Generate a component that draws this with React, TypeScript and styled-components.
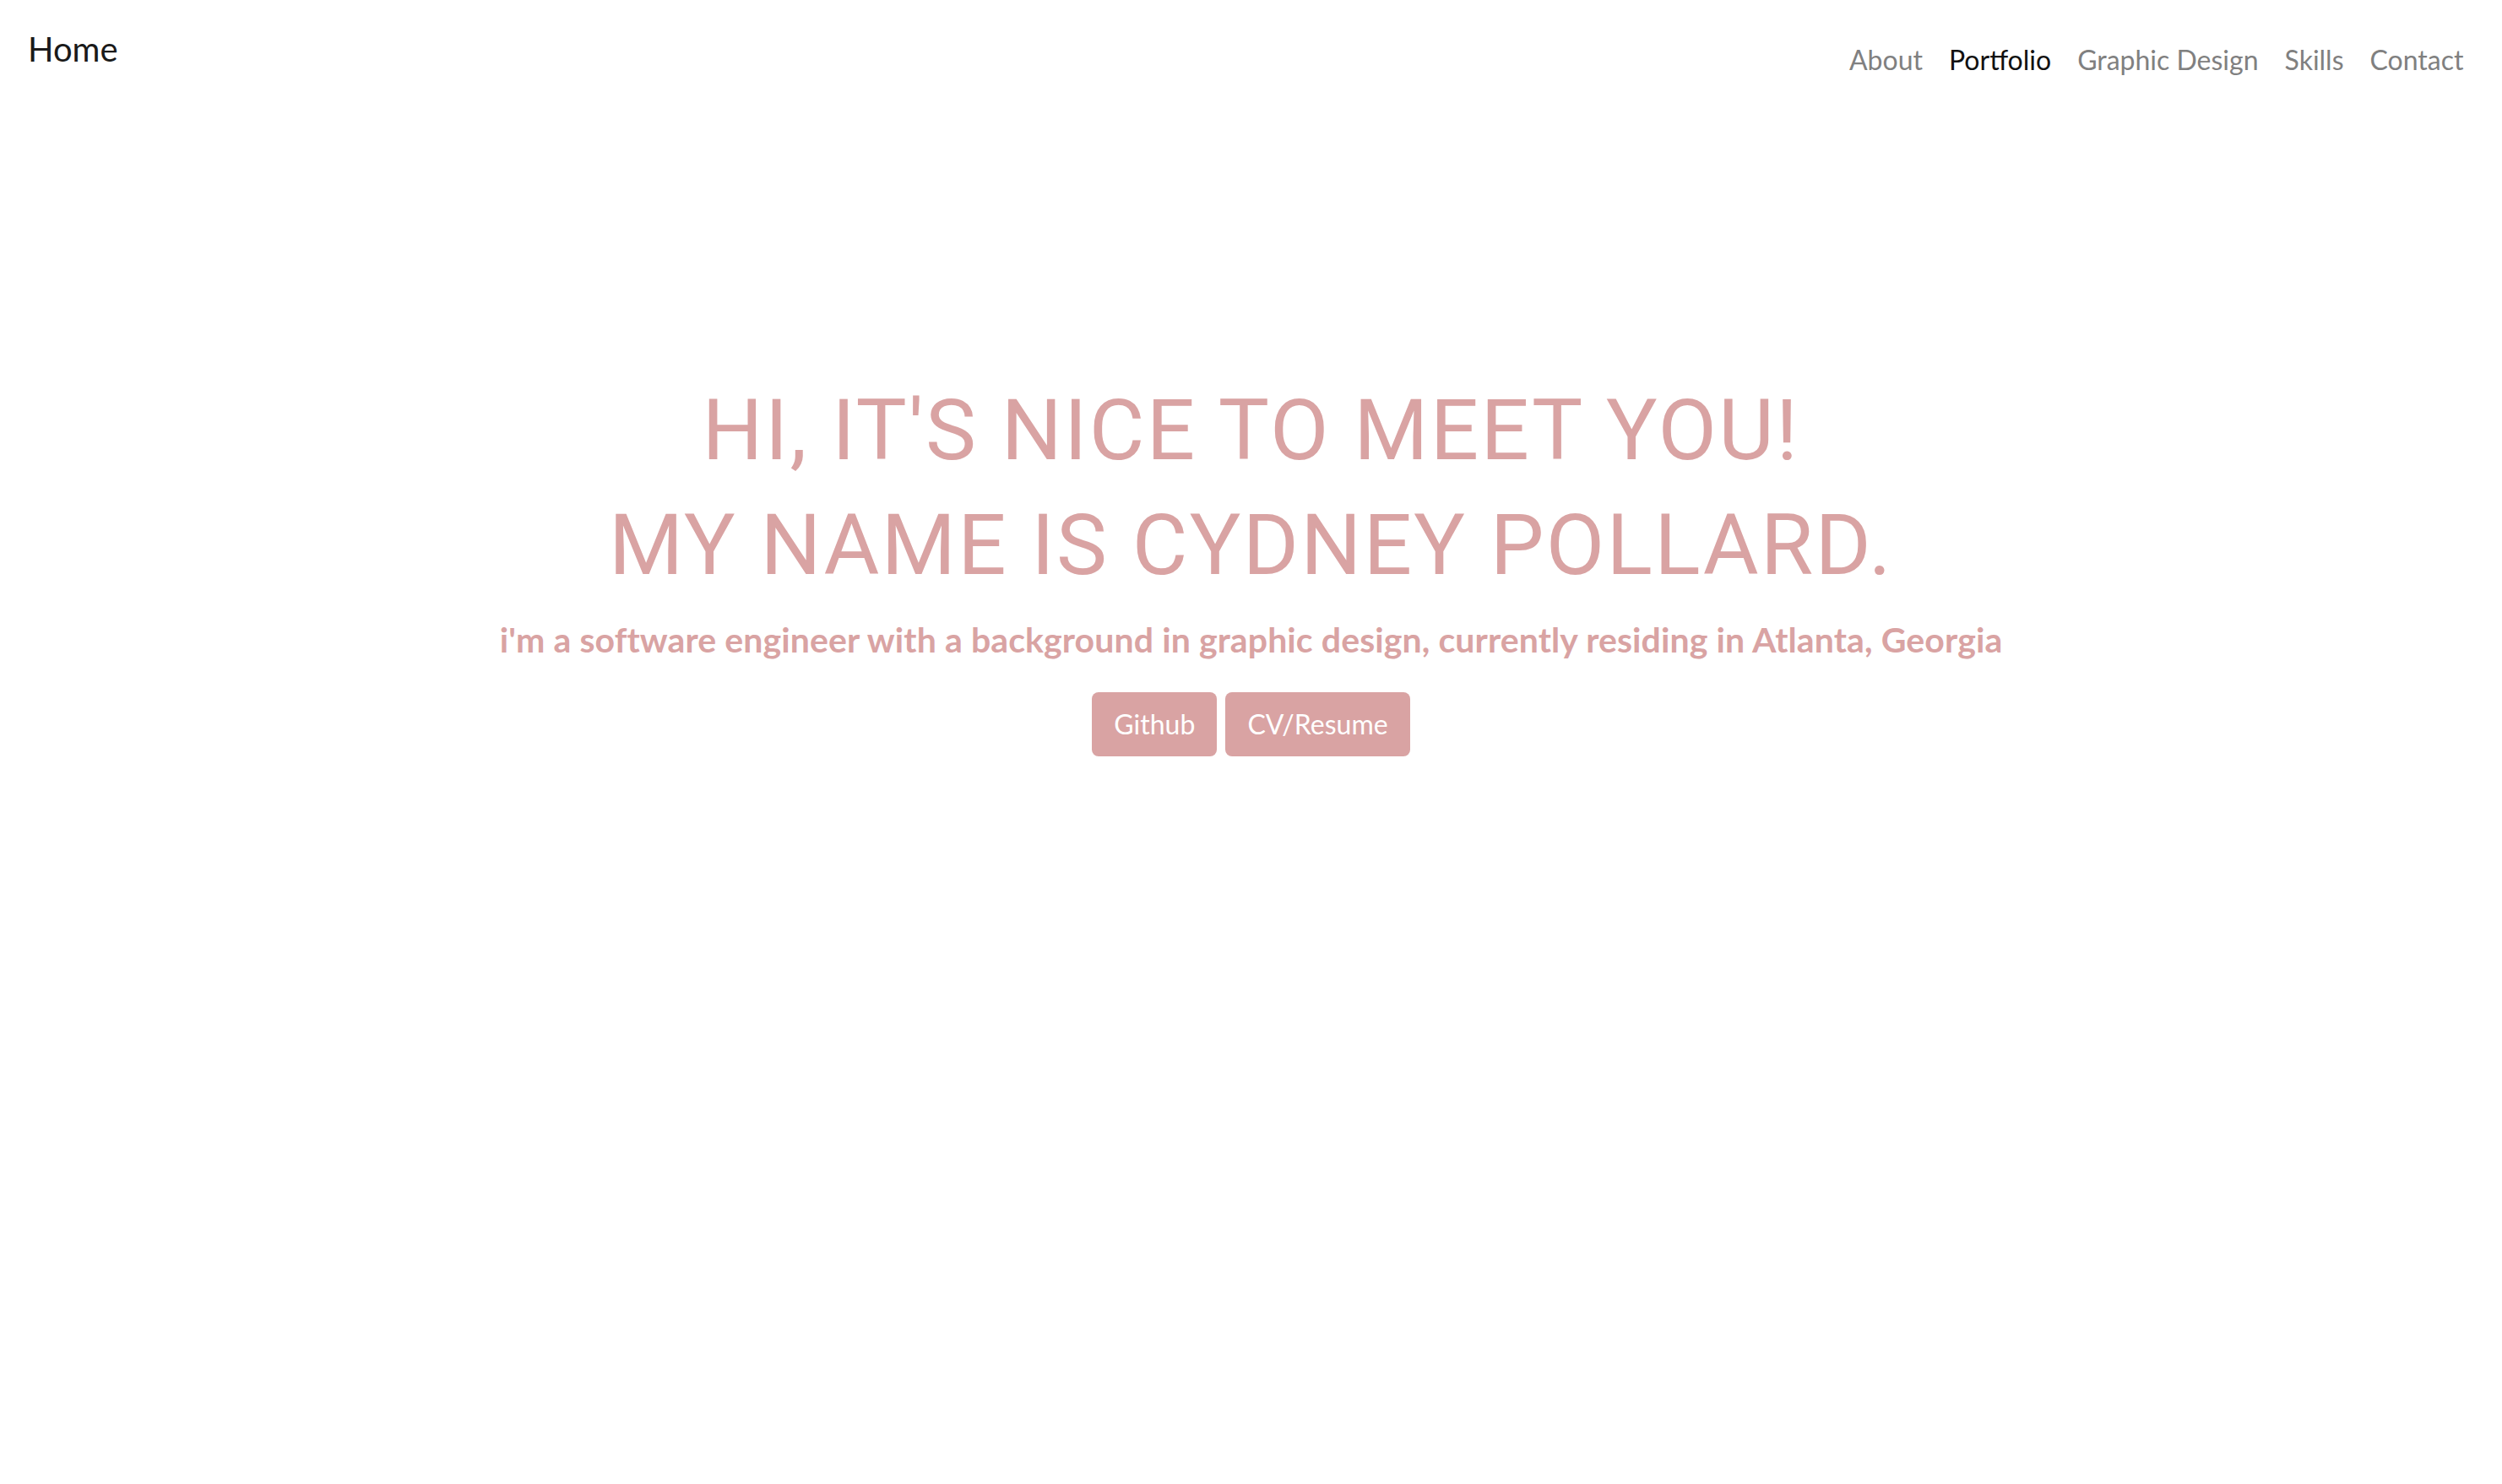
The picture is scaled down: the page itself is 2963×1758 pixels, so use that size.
import React from "react";
import styled, { createGlobalStyle } from "styled-components";

const Global = createGlobalStyle`
  html, body { margin: 0; padding: 0; background: #ffffff; }
  body { font-family: "Lato", "Open Sans", sans-serif; }
  * { box-sizing: border-box; }
`;

const PINK = "#d9a3a3";

const Page = styled.div`
  min-height: 100vh;
  background: #fff;
`;

const Header = styled.header`
  display: flex;
  justify-content: space-between;
  align-items: flex-start;
  padding: 34px 30px 0 33px;
`;

const Brand = styled.a`
  font-family: "Lato", sans-serif;
  font-size: 40px;
  line-height: 48px;
  color: #1a1a1a;
  text-decoration: none;
`;

const Nav = styled.nav`
  display: flex;
  margin-top: 18px;
`;

const NavLink = styled.a<{ $active?: boolean }>`
  font-family: "Lato", sans-serif;
  font-size: 32px;
  line-height: 38px;
  padding: 0 15.5px;
  color: ${(p) => (p.$active ? "#111111" : "#808080")};
  text-decoration: none;
`;

const Hero = styled.main`
  display: flex;
  flex-direction: column;
  align-items: center;
  padding-top: 352px;
`;

const Title = styled.h1`
  margin: 0;
  font-family: "Roboto", sans-serif;
  font-weight: 400;
  font-size: 101px;
  line-height: 136px;
  letter-spacing: 2.3px;
  color: ${PINK};
  text-align: center;
  text-transform: uppercase;
`;

const Subtitle = styled.p`
  margin: 19px 0 0;
  font-family: "Lato", sans-serif;
  font-weight: 700;
  font-size: 41px;
  line-height: 49px;
  letter-spacing: 0.1px;
  color: ${PINK};
  text-align: center;
`;

const Buttons = styled.div`
  display: flex;
  gap: 10px;
  margin-top: 38px;
`;

const Button = styled.a`
  display: inline-block;
  font-family: "Lato", sans-serif;
  font-size: 32px;
  line-height: 52px;
  padding: 12px 26px;
  border-radius: 8px;
  background: ${PINK};
  color: #ffffff;
  text-decoration: none;
`;

export default function App() {
  return (
    <Page>
      <Global />
      <Header>
        <Brand href="#">Home</Brand>
        <Nav>
          <NavLink href="#">About</NavLink>
          <NavLink href="#" $active>
            Portfolio
          </NavLink>
          <NavLink href="#">Graphic Design</NavLink>
          <NavLink href="#">Skills</NavLink>
          <NavLink href="#">Contact</NavLink>
        </Nav>
      </Header>
      <Hero>
        <Title>
          Hi, it's nice to meet you!
          <br />
          My name is Cydney Pollard.
        </Title>
        <Subtitle>
          i'm a software engineer with a background in graphic design, currently residing in Atlanta, Georgia
        </Subtitle>
        <Buttons>
          <Button href="#">Github</Button>
          <Button href="#">CV/Resume</Button>
        </Buttons>
      </Hero>
    </Page>
  );
}
